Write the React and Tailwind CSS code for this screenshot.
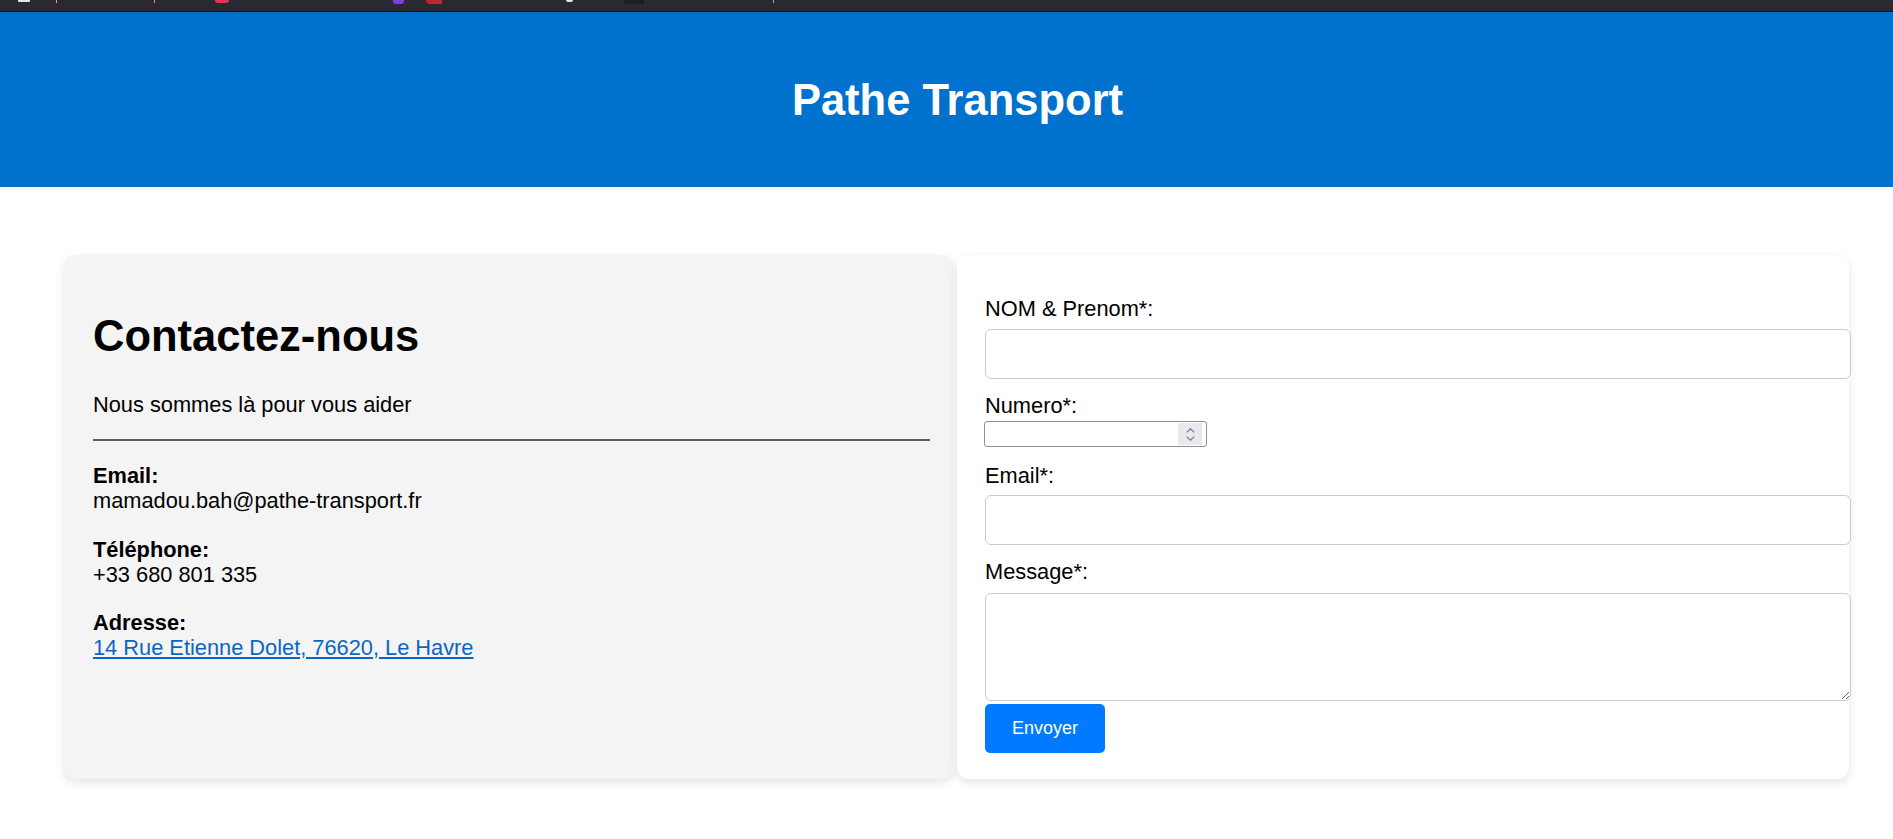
import React from "react";

function Blip({ ml, w, h, cls }) {
  return <div className={cls} style={{ marginLeft: ml, width: w, height: h }} />;
}

export default function App() {
  return (
    <div className="w-full min-h-[839px] overflow-hidden bg-white font-['Liberation_Sans',Arial,sans-serif] text-black">
      <div className="w-[1915px]">
        {/* browser strip */}
        <div className="h-[12px] bg-[#2a2932] border-b border-[#121116] flex items-start">
          <Blip ml={18} w={12} h={2} cls="bg-[#e6e6e6] rounded-b-[1px]" />
          <Blip ml={26} w={1} h={3} cls="bg-[#e8a060]" />
          <Blip ml={97} w={1} h={3} cls="bg-[#e8a060]" />
          <Blip ml={60} w={14} h={3} cls="bg-[#e8345a] rounded-b-full" />
          <Blip ml={164} w={11} h={4} cls="bg-[#7b3fe4] rounded-b-[3px]" />
          <Blip ml={22} w={16} h={4} cls="bg-[#c0262d] rounded-bl-[6px]" />
          <Blip ml={124} w={7} h={2} cls="bg-[#e6e6e6] rounded-b-[2px]" />
          <Blip ml={51} w={20} h={4} cls="bg-[#1e1d22]" />
          <Blip ml={129} w={1} h={3} cls="bg-[#7aa8e0]" />
        </div>

        {/* header */}
        <header className="h-[175px] bg-[#0071cd] flex items-center justify-center">
          <h1 className="text-white font-bold text-[43.5px] leading-[50px]">Pathe Transport</h1>
        </header>

        {/* main */}
        <main className="flex items-stretch pl-[64px] pt-[68px] gap-[4px]">
          {/* left card */}
          <section className="w-[889px] bg-[#f4f4f4] rounded-[12px] shadow-[0_4px_10px_rgba(0,0,0,0.1)] pt-[56px] pl-[29px] pr-[23px]">
            <h2 className="font-bold text-[43.5px] leading-[50px]">Contactez-nous</h2>
            <p className="mt-[31px] text-[21.8px] leading-[25px]">Nous sommes là pour vous aider</p>
            <div className="mt-[22px] h-[2px] bg-[#5f5f5f]" />
            <div className="mt-[22px] text-[21.8px] leading-[25px]">
              <div className="font-bold">Email:</div>
              <div>mamadou.bah@pathe-transport.fr</div>
            </div>
            <div className="mt-[24px] text-[21.8px] leading-[25px]">
              <div className="font-bold">Téléphone:</div>
              <div>+33 680 801 335</div>
            </div>
            <div className="mt-[23px] text-[21.8px] leading-[25px]">
              <div className="font-bold">Adresse:</div>
              <a href="#" className="text-[#0b66c3] underline">14 Rue Etienne Dolet, 76620, Le Havre</a>
            </div>
          </section>

          {/* right card */}
          <section className="w-[892px] bg-white rounded-[12px] shadow-[0_4px_10px_rgba(0,0,0,0.1)] pt-[41px] pl-[28px] pb-[26px]">
            <label className="block text-[21.8px] leading-[25px]">NOM &amp; Prenom*:</label>
            <input type="text" className="mt-[8px] block w-[866px] h-[50px] border border-[#cccccc] rounded-[6px] bg-white px-[14px] outline-none" />

            <label className="mt-[14px] block text-[21.8px] leading-[25px]">Numero*:</label>
            <div className="mt-[3px] -ml-[1px] w-[223px] h-[26px] border border-[#8f8f9d] rounded-[3px] bg-white flex items-center pl-[3px] pr-[4px]">
              <input type="text" className="flex-1 min-w-0 h-full outline-none bg-transparent text-[18px]" />
              <div className="w-[24px] h-[22px] bg-[#e9e9ed] flex flex-col items-center justify-center gap-[3px]">
                <svg width="9" height="5" viewBox="0 0 9 5" fill="none">
                  <path d="M0.7 4.4 L4.5 0.8 L8.3 4.4" stroke="#6f6f7a" strokeWidth="1.1" />
                </svg>
                <svg width="9" height="5" viewBox="0 0 9 5" fill="none">
                  <path d="M0.7 0.6 L4.5 4.2 L8.3 0.6" stroke="#6f6f7a" strokeWidth="1.1" />
                </svg>
              </div>
            </div>

            <label className="mt-[16px] block text-[21.8px] leading-[25px]">Email*:</label>
            <input type="email" className="mt-[7px] block w-[866px] h-[50px] border border-[#cccccc] rounded-[6px] bg-white px-[14px] outline-none" />

            <label className="mt-[14px] block text-[21.8px] leading-[25px]">Message*:</label>
            <textarea className="mt-[9px] block w-[866px] h-[108px] border border-[#cccccc] rounded-[6px] bg-white px-[14px] py-[10px] outline-none resize" />

            <button type="button" className="mt-[3px] block h-[49px] px-[27px] bg-[#007bff] text-white text-[18px] rounded-[5px]">
              Envoyer
            </button>
          </section>
        </main>
      </div>
    </div>
  );
}
